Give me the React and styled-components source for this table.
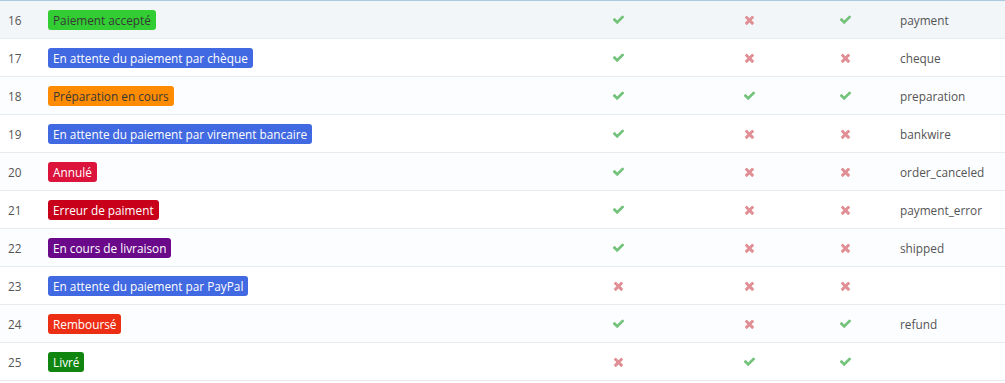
import styled, { createGlobalStyle } from 'styled-components'

const Global = createGlobalStyle`
  body {
    margin: 0;
    background: #fff;
    font-family: "Open Sans", "Liberation Sans", sans-serif;
    font-size: 11.8px;
    color: #555;
  }
`

const rows = [
  { id: 16, label: 'Paiement accepté', bg: '#32cd32', dark: true, a: 1, b: 0, c: 1, tpl: 'payment', hover: true },
  { id: 17, label: 'En attente du paiement par chèque', bg: '#4169e1', a: 1, b: 0, c: 0, tpl: 'cheque' },
  { id: 18, label: 'Préparation en cours', bg: '#ff8c00', dark: true, a: 1, b: 1, c: 1, tpl: 'preparation' },
  { id: 19, label: 'En attente du paiement par virement bancaire', bg: '#4169e1', a: 1, b: 0, c: 0, tpl: 'bankwire' },
  { id: 20, label: 'Annulé', bg: '#dc143c', a: 1, b: 0, c: 0, tpl: 'order_canceled' },
  { id: 21, label: 'Erreur de paiment', bg: '#c8001a', a: 1, b: 0, c: 0, tpl: 'payment_error' },
  { id: 22, label: 'En cours de livraison', bg: '#6a0a8a', a: 1, b: 0, c: 0, tpl: 'shipped' },
  { id: 23, label: 'En attente du paiement par PayPal', bg: '#4169e1', a: 0, b: 0, c: 0, tpl: '' },
  { id: 24, label: 'Remboursé', bg: '#ec2e15', a: 1, b: 0, c: 1, tpl: 'refund' },
  { id: 25, label: 'Livré', bg: '#108510', a: 0, b: 1, c: 1, tpl: '' },
]

const Check = () => (
  <svg width="13" height="13" viewBox="0 0 1792 1792">
    <path fill="#72c279" d="M1671 566q0 40-28 68l-724 724-136 136q-28 28-68 28t-68-28l-136-136-362-362q-28-28-28-68t28-68l136-136q28-28 68-28t68 28l294 295 656-657q28-28 68-28t68 28l136 136q28 28 28 68z" />
  </svg>
)

const Cross = () => (
  <svg width="10" height="10" viewBox="182 262 1308 1308">
    <path fill="#e08f95" d="M1490 1322q0 40-28 68l-136 136q-28 28-68 28t-68-28l-294-294-294 294q-28 28-68 28t-68-28l-136-136q-28-28-28-68t28-68l294-294-294-294q-28-28-28-68t28-68l136-136q28-28 68-28t68 28l294 294 294-294q28-28 68-28t68 28l136 136q28 28 28 68t-28 68l-294 294 294 294q28 28 28 68z" />
  </svg>
)

const Flag = ({ on }) => (on ? <Check /> : <Cross />)

const Table = styled.div`
  border-top: 1px solid #a9cbe2;
`

const Row = styled.div`
  display: grid;
  grid-template-columns: 48px 512px 116px 146px 46px 1fr;
  align-items: center;
  height: 37px;
  border-bottom: 1px solid #e7ebef;
  background: ${(p) => (p.$hover ? '#f2f6f9' : p.$odd ? '#fcfdfe' : '#fff')};
`

const Num = styled.div`
  padding-left: 8px;
`

const Badge = styled.span`
  justify-self: start;
  display: inline-block;
  height: 20px;
  line-height: 20px;
  padding: 0 5px;
  border-radius: 3px;
  background: ${(p) => p.$bg};
  color: ${(p) => (p.$dark ? '#383838' : '#fff')};
  white-space: nowrap;
`

const Cell = styled.div`
  display: flex;
  justify-content: center;
  align-items: center;
`

const Tpl = styled.div`
  padding-left: 32px;
`

export default function App() {
  return (
    <>
      <Global />
      <Table>
        {rows.map((r, i) => (
          <Row key={r.id} $hover={r.hover} $odd={i % 2 === 0}>
            <Num>{r.id}</Num>
            <Badge $bg={r.bg} $dark={r.dark}>{r.label}</Badge>
            <Cell><Flag on={r.a} /></Cell>
            <Cell><Flag on={r.b} /></Cell>
            <Cell><Flag on={r.c} /></Cell>
            <Tpl>{r.tpl}</Tpl>
          </Row>
        ))}
      </Table>
    </>
  )
}
